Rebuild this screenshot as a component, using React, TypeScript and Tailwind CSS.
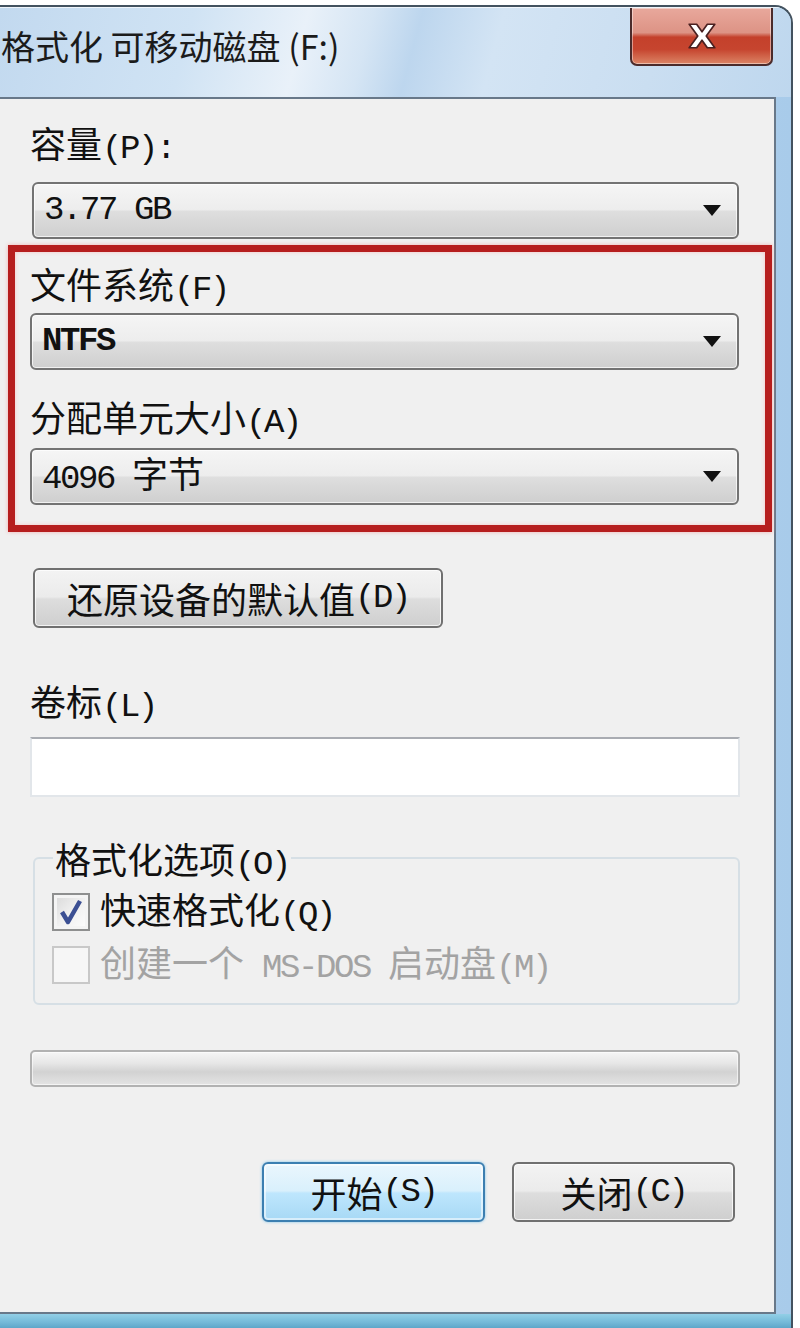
import React from 'react';

// CJK runs use Noto Sans CJK, ASCII runs use a half-width mono face (SimSun-like)
const Txt: React.FC<{ s: string; bold?: boolean }> = ({ s, bold }) => (
  <>
    {s.split(/([\x20-\x7E]+)/).map((part, i) =>
      part === '' ? null : /^[\x20-\x7E]+$/.test(part) ? (
        <span
          key={i}
          className={`font-['Liberation_Mono',monospace] text-[34px] tracking-[-2.4px] whitespace-pre ${bold ? 'font-bold' : ''}`}
        >
          {part}
        </span>
      ) : (
        <span key={i} className="text-[36px]">
          {part}
        </span>
      )
    )}
  </>
);

const Label: React.FC<{ s: string; className?: string }> = ({ s, className = '' }) => (
  <div className={`h-[40px] leading-[40px] text-[#111] ${className}`}>
    <Txt s={s} />
  </div>
);

const ComboBox: React.FC<{ value: string; bold?: boolean; className?: string }> = ({
  value,
  bold,
  className = '',
}) => (
  <div
    className={`h-[57px] flex items-center justify-between pl-[10px] pr-[16px] rounded-[6px] border-2 border-[#737373] bg-[linear-gradient(to_bottom,#f5f5f5_0%,#ededed_48%,#dedede_52%,#cfcfcf_100%)] shadow-[inset_0_0_0_1px_rgba(255,255,255,0.7)] leading-[40px] text-[#111] ${className}`}
  >
    <div>
      <Txt s={value} bold={bold} />
    </div>
    <svg width="18" height="11" viewBox="0 0 18 11">
      <polygon points="0,0 18,0 9,11" fill="#111" />
    </svg>
  </div>
);

const PushButton: React.FC<{ text: string; primary?: boolean; className?: string }> = ({
  text,
  primary,
  className = '',
}) => (
  <button
    className={`h-[60px] flex items-center justify-center rounded-[6px] border-2 leading-[40px] text-[#111] ${
      primary
        ? 'border-[#3c7fb1] bg-[linear-gradient(to_bottom,#eaf6fd_0%,#d9f0fc_48%,#bee6fd_52%,#a7d9f5_100%)] shadow-[inset_0_0_0_2px_rgba(255,255,255,0.55),0_0_3px_#7ec4ea]'
        : 'border-[#707070] bg-[linear-gradient(to_bottom,#f3f3f3_0%,#ebebeb_48%,#dddddd_52%,#cfcfcf_100%)] shadow-[inset_0_0_0_1px_rgba(255,255,255,0.75)]'
    } ${className}`}
  >
    <Txt s={text} />
  </button>
);

const CheckBox: React.FC<{ checked?: boolean; disabled?: boolean; text: string }> = ({
  checked,
  disabled,
  text,
}) => (
  <div className="h-[40px] flex items-center gap-[10px]">
    <div
      className={`w-[38px] h-[38px] flex items-center justify-center border-2 ${
        disabled
          ? 'border-[#c8c8c8] bg-[#f6f6f6]'
          : 'border-[#8e8f8f] bg-[linear-gradient(135deg,#d8d8d8_0%,#f0f0f0_50%,#fdfdfd_100%)] shadow-[inset_0_0_0_3px_#f4f4f4]'
      }`}
    >
      {checked && (
        <svg width="30" height="30" viewBox="0 0 30 30">
          <path d="M6 15 L12 25 L24 4" fill="none" stroke="#3b4f93" strokeWidth="4.5" strokeLinejoin="round" />
        </svg>
      )}
    </div>
    <div className={`leading-[40px] ${disabled ? 'text-[#a3a3a3]' : 'text-[#111]'}`}>
      <Txt s={text} />
    </div>
  </div>
);

const CloseButton: React.FC = () => (
  <div className="w-[143px] h-[58px] mr-[18px] flex items-center justify-center rounded-b-[7px] border-2 border-t-0 border-[#4b2b2b] bg-[linear-gradient(to_bottom,#e8a89c_0%,#dd9385_44%,#c4402b_52%,#c6452f_74%,#dc8566_100%)] shadow-[inset_0_0_0_1px_rgba(255,255,255,0.45)]">
    <svg width="32" height="28" viewBox="0 0 30 26">
      <path
        d="M3 2 H10 L15 9 L20 2 H27 L19 13 L27 24 H20 L15 17 L10 24 H3 L11 13 Z"
        fill="#ffffff"
        stroke="#4a2020"
        strokeWidth="1.6"
        strokeLinejoin="round"
      />
    </svg>
  </div>
);

export default function App() {
  return (
    <div className="w-[800px] h-[1328px] bg-white pt-[5px] overflow-hidden font-['Noto_Sans_CJK_SC',sans-serif]">
      <div className="w-[793px] h-[1323px] flex flex-col bg-[linear-gradient(to_right,#b9d6ef_0%,#c2dbf1_40%,#a8cbea_100%)] border-t-2 border-r-2 border-[#43525f] rounded-tr-[18px] overflow-hidden">
        {/* Title bar */}
        <div className="h-[90px] flex items-start justify-between border-t border-white/70 bg-[linear-gradient(105deg,#c2d9ef_0%,#d0e3f4_24%,#e9f1f9_38%,#d5e5f4_46%,#bdd6ee_52%,#d3e4f4_62%,#cadef1_82%,#bed7ee_100%)]">
          <div className="pt-[14px] pl-[1px] text-[34px] leading-[48px] text-[#1b1b1b]">格式化 可移动磁盘 (F:)</div>
          <CloseButton />
        </div>

        {/* Client area */}
        <div className="w-[776px] h-[1217px] flex flex-col bg-[#f0f0f0] border-t-2 border-r-2 border-b-2 border-[#687889]">
          <Label s="容量(P):" className="mt-[23px] ml-[30px]" />
          <ComboBox value="3.77 GB" className="mt-[20px] ml-[32px] w-[707px]" />

          {/* highlighted group */}
          <div className="mt-[6px] ml-[8px] w-[764px] flex flex-col border-[7px] border-[#b61e1e] shadow-[0_0_4px_#f3b0b0,inset_0_0_4px_#f6c4c4] pt-[11px] pl-[15px] pb-[20px]">
            <Label s="文件系统(F)" />
            <ComboBox value="NTFS" bold className="mt-[10px] w-[709px]" />
            <Label s="分配单元大小(A)" className="mt-[26px]" />
            <ComboBox value="4096 字节" className="mt-[12px] w-[709px]" />
          </div>

          <PushButton text="还原设备的默认值(D)" className="mt-[36px] ml-[33px] w-[410px]" />

          <Label s="卷标(L)" className="mt-[52px] ml-[30px]" />
          <div className="mt-[17px] ml-[30px] w-[710px] h-[60px] bg-white border-2 border-[#e2e6ea] border-t-[#a9acb2]" />

          <fieldset className="mt-[41px] ml-[33px] w-[707px] border-2 border-[#d6dfe5] rounded-[6px] pb-[18px]">
            <legend className="ml-[18px] px-[2px] h-[40px] leading-[40px] text-[#111]">
              <Txt s="格式化选项(O)" />
            </legend>
            <div className="mt-[14px] pl-[17px] flex flex-col gap-[13px]">
              <CheckBox checked text="快速格式化(Q)" />
              <CheckBox disabled text="创建一个 MS-DOS 启动盘(M)" />
            </div>
          </fieldset>

          <div className="mt-[45px] ml-[30px] w-[710px] h-[37px] rounded-[5px] border-2 border-[#b2b2b2] bg-[linear-gradient(to_bottom,#f6f6f6_0%,#e6e6e6_35%,#d2d2d2_60%,#e4e4e4_100%)] shadow-[inset_0_0_0_1px_rgba(255,255,255,0.6)]" />

          <div className="mt-[75px] pr-[39px] flex justify-end gap-[27px]">
            <PushButton text="开始(S)" primary className="w-[223px]" />
            <PushButton text="关闭(C)" className="w-[223px]" />
          </div>
        </div>

        {/* bottom frame */}
        <div className="flex-1 bg-[linear-gradient(to_bottom,#92cfe6_0%,#74b9d8_60%,#5ea6c9_100%)]" />
      </div>
    </div>
  );
}
